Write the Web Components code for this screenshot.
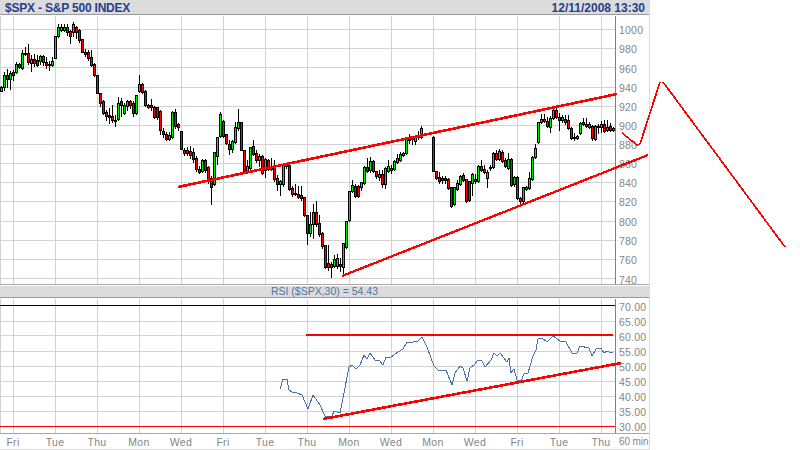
<!DOCTYPE html>
<html><head><meta charset="utf-8"><title>$SPX</title>
<style>html,body{margin:0;padding:0;background:#fff;overflow:hidden}body{font-family:"Liberation Sans",Arial,sans-serif}</style>
</head><body>
<stock-chart>
  <title-bar><span slot="left">$SPX - S&amp;P 500 INDEX</span><span slot="right">12/11/2008 13:30</span></title-bar>
  <price-panel></price-panel>
  <indicator-bar>RSI ($SPX,30) = 54.43</indicator-bar>
  <rsi-panel></rsi-panel>
  <time-axis></time-axis>
  <trend-overlay></trend-overlay>
</stock-chart>
<script>
const VX=[13,55,97,139,181,223,265,307,349,391,433,475,517,559,601];
function gridMarkup(ys,y0,h){
  let d='M0.5 '+y0+'V'+(y0+h);
  VX.forEach(x=>d+='M'+(x+.5)+' '+y0+'V'+(y0+h));
  ys.forEach(y=>d+='M0 '+(y+.5)+'H615');
  return `<path d="${d}" stroke="#d2d2d2" fill="none"/>`;
}
function axisGrid(labels,centers,top){
  const n=centers.length,b=[];
  for(let i=0;i<n-1;i++)b.push((centers[i]+centers[i+1])/2);
  const start=2*centers[0]-b[0],end=2*centers[n-1]-b[n-2];
  const edges=[start,...b,end],rows=[];
  for(let i=0;i<n;i++)rows.push((edges[i+1]-edges[i])+'px');
  return {pad:start-top,rows:rows.join(' '),html:labels.map(l=>`<div>${l}</div>`).join('')};
}
const AXIS_CSS=`.axis{width:33px;box-sizing:border-box;display:grid;align-content:start;padding-left:3px;font-size:10.5px;color:#858585;align-items:center;justify-items:start;letter-spacing:.02em}
.axis div{line-height:12px;white-space:nowrap}
.line{width:1px;background:#808080;flex:none}
svg{display:block;flex:none;shape-rendering:crispEdges}`;

class StockChart extends HTMLElement{
  constructor(){super();this.attachShadow({mode:'open'}).innerHTML=`<style>
  :host{display:flex;flex-direction:column;position:relative;width:650px;height:450px;box-sizing:border-box;border-right:1px solid #dcdcdc;font-family:"Liberation Sans",Arial,sans-serif}
  </style><slot></slot>`;}
}
class TitleBar extends HTMLElement{
  constructor(){super();this.attachShadow({mode:'open'}).innerHTML=`<style>
  :host{display:flex;justify-content:space-between;align-items:center;box-sizing:border-box;height:15px;margin-bottom:1px;padding:1px 4px 0 5px;background:#dcdcdc;border-bottom:1px solid #9a9a9a;color:#24408e;font-weight:bold;font-size:12px;line-height:14px;white-space:nowrap}
  ::slotted([slot=left]){letter-spacing:-.2px}
  </style><slot name="left"></slot><slot name="right"></slot>`;}
}
class IndicatorBar extends HTMLElement{
  constructor(){super();this.attachShadow({mode:'open'}).innerHTML=`<style>
  :host{display:block;box-sizing:border-box;height:12px;margin-bottom:1px;background:#dcdcdc;border-bottom:1px solid #9a9a9a;color:#4f74a8;font-size:10.5px;line-height:11px;text-align:center;white-space:nowrap}
  </style><slot></slot>`;}
}
const CANDLES="g 87 91 86 91;g 75 87 72 90;r 75 79 69 87;g 73 79 71 89;r 72 75 70 80;g 64 72 62 73;r 64 67 63 68;g 53 68 50 69;r 53 54 47 55;r 53 62 44 64;g 59 63 55 71;r 59 63 54 66;r 60 65 55 66;g 56 61 55 64;r 56 62 55 65;r 62 65 57 68;r 64 65 61 70;g 61 65 57 66;g 36 58 36 58;g 27 36 24 37;g 27 30 24 31;g 27 30 24 31;r 27 32 24 35;r 31 36 30 43;g 24 32 22 36;r 27 32 26 38;r 30 40 29 42;r 39 52 39 52;r 52 54 49 56;r 52 58 50 60;r 57 65 50 66;r 64 75 63 76;r 75 93 75 93;r 93 103 93 106;r 101 113 100 114;r 112 116 110 120;r 115 117 108 123;r 116 120 105 122;r 120 121 115 126;g 103 119 97 120;r 101 105 98 116;g 105 113 103 114;g 101 106 100 110;r 101 105 100 108;r 103 113 101 116;g 95 113 95 114;g 84 91 75 92;r 84 92 83 93;r 91 105 90 106;r 105 107 104 108;r 105 107 99 110;r 107 117 106 118;r 107 117 107 119;r 111 130 110 134;r 131 134 128 137;r 134 139 132 140;g 135 139 132 140;g 112 137 111 138;r 112 126 109 128;r 124 127 123 130;r 131 149 131 149;r 150 153 148 155;r 150 153 147 155;r 151 155 146 158;r 152 159 148 162;r 158 169 156 171;r 169 172 166 173;g 160 171 159 172;r 160 170 159 172;r 167 181 166 183;r 178 187 176 204;g 152 184 152 185;g 137 156 137 164;g 114 136 112 137;r 121 136 120 137;r 134 143 134 144;r 144 149 140 154;g 141 149 140 152;g 127 142 122 143;g 122 128 109 130;r 122 150 122 150;r 150 171 150 172;g 166 171 160 172;g 147 168 147 170;r 146 154 140 155;r 153 160 150 162;g 156 160 154 166;r 156 173 155 174;g 159 170 158 177;r 160 169 159 170;r 166 169 158 170;r 167 179 160 181;r 178 184 175 190;g 181 184 180 195;g 164 184 163 186;r 164 166 163 168;r 165 189 165 190;r 188 194 186 196;r 193 194 184 195;r 194 197 186 198;r 195 198 186 200;r 197 215 197 216;r 215 233 215 244;g 224 233 212 236;g 212 224 204 238;r 212 224 201 226;r 223 234 215 236;r 233 246 232 248;r 245 267 245 268;r 263 267 245 270;r 264 267 262 277;g 259 266 255 267;g 258 266 254 268;r 264 266 258 271;g 243 267 243 276;g 221 247 221 248;g 191 220 191 221;g 185 191 180 192;r 186 196 184 197;r 186 196 185 197;g 182 187 182 190;g 167 183 166 184;r 167 171 158 172;g 161 170 157 172;r 161 171 160 172;r 171 176 171 178;g 174 177 170 180;r 174 184 170 187;g 168 184 167 188;g 166 171 160 172;r 168 170 165 173;g 161 169 160 170;g 158 162 154 163;g 154 160 152 161;g 153 155 152 156;g 139 153 139 154;r 137 140 134 143;r 137 139 136 144;g 137 141 136 144;r 136 137 131 139;g 128 137 126 138;_;_;_;r 137 171 136 171;r 171 178 171 179;r 177 181 172 183;r 178 180 176 183;r 178 180 176 183;r 179 188 178 189;r 187 206 187 207;g 187 204 187 205;g 183 189 180 190;g 176 184 175 185;r 175 180 173 181;r 179 201 179 202;r 181 200 181 201;g 174 183 173 195;r 179 181 174 183;g 166 181 165 182;r 166 170 160 171;r 169 172 165 173;g 172 178 170 187;g 167 168 165 170;g 153 167 152 168;r 153 159 150 160;g 151 159 149 160;r 152 161 150 162;r 160 166 158 167;g 159 168 153 169;r 159 185 158 186;g 177 184 176 186;r 177 198 176 199;r 198 201 197 204;g 187 201 187 202;g 187 189 186 190;g 178 188 172 189;g 157 179 156 180;g 148 157 144 158;g 122 142 122 143;g 119 122 114 123;r 119 121 114 122;r 121 126 117 127;g 118 127 116 132;g 110 118 107 119;r 110 117 106 118;r 117 120 113 130;g 117 120 115 122;r 119 122 115 124;r 120 128 115 129;r 128 138 127 139;r 137 138 133 140;g 136 138 135 139;g 123 133 122 134;r 122 124 118 125;r 124 126 118 127;g 124 127 122 128;r 126 138 125 140;g 126 139 125 140;r 126 127 124 133;g 124 127 121 132;r 124 131 120 132;g 127 130 120 131;r 126 130 123 131;g 128 130 127 131";
class PricePanel extends HTMLElement{
  constructor(){super();
    const ys=[29,48,67,87,106,125,144,163,182,201,221,240,259,278];
    let k='',g='',r='',x=1;
    CANDLES.split(';').forEach(s=>{
      if(s!=='_'){
        const [c,t,b,wt,wb]=s.split(' ').map((v,i)=>i?+v:v);
        k+=`M${x} ${wt}h1V${wb+1}h-1z M${x-1} ${t}h3V${b+1}h-3z`;
        if(b-t>1){const f=`M${x} ${t+1}h1V${b}h-1z`;if(c==='g')g+=f;else r+=f;}
      }
      x+=3;
    });
    const labels=[1000,980,960,940,920,900,880,860,840,820,800,780,760,740];
    const centers=[30,49.5,68.5,88,107,126.5,145.5,164,183,202,222,241,260,279.5];
    const a=axisGrid(labels,centers,16);
    this.attachShadow({mode:'open'}).innerHTML=`<style>
    :host{display:flex;height:269px;border-bottom:1px solid #a8a8a8;box-sizing:border-box;margin-bottom:1px}
    ${AXIS_CSS}</style>
    <svg width="615" height="268" viewBox="0 16 615 268">${gridMarkup(ys,16,268)}
      <path d="${k}" fill="#000"/><path d="${g}" fill="#00ea00"/><path d="${r}" fill="#f00"/></svg>
    <div class="line"></div>
    <div class="axis" style="padding-top:${a.pad}px;grid-template-rows:${a.rows}">${a.html}</div>`;
  }
}
const RSI="280,389 283,379 287,379 289,390 292,392 297,393 302,395 308,409 313,395 320,405 325,416 332,416 334,411 340,413 344,393 349,367 352,365 356,369 360,365 364,355 367,359 370,353 376,361 379,360 383,365 386,357 391,357 398,352 403,349 407,342 413,342 418,341 422,337 427,347 434,366 438,370 446,370 452,385 455,373 460,366 463,368 467,381 470,368 474,365 478,360 482,361 485,367 491,360 494,353 497,356 500,353 507,362 509,358 511,373 514,369 517,380 521,381 524,374 528,373 533,356 536,350 538,339 542,338 547,342 553,336 560,341 566,342 572,353 577,353 580,346 589,348 592,356 596,349 601,348 604,353 607,351 611,353 613,352";
class RsiPanel extends HTMLElement{
  constructor(){super();
    const ys=[321,335,351,366,381,396,411];
    const labels=['70.00','65.00','60.00','55.00','50.00','45.00','40.00','35.00','30.00'];
    const centers=[306.5,321.5,336.5,351.5,367,382,397,412,427];
    const a=axisGrid(labels,centers,299);
    this.attachShadow({mode:'open'}).innerHTML=`<style>
    :host{display:flex;height:135px;border-bottom:1px solid #a8a8a8;box-sizing:border-box}
    ${AXIS_CSS}</style>
    <svg width="615" height="134" viewBox="0 299 615 134">${gridMarkup(ys,299,134)}
      <path d="M0 305.5H615" stroke="#000" fill="none"/>
      <path d="M0 426.5H615" stroke="#f00" fill="none"/>
      <polyline points="${RSI}" fill="none" stroke="#4a72aa" stroke-width="1"/></svg>
    <div class="line"></div>
    <div class="axis" style="padding-top:${a.pad}px;grid-template-rows:${a.rows}">${a.html}</div>`;
  }
}
class TimeAxis extends HTMLElement{
  constructor(){super();
    const days=['Fri','Tue','Thu','Mon','Wed','Fri','Tue','Thu','Mon','Wed','Mon','Wed','Fri','Tue','Thu'];
    this.attachShadow({mode:'open'}).innerHTML=`<style>
    :host{display:flex;height:16px;box-sizing:border-box;border-bottom:1px solid #dcdcdc;color:#858585;font-size:10.5px;line-height:16px;white-space:nowrap;letter-spacing:.03em}
    .days{display:grid;grid-template-columns:repeat(15,42px);width:630px;flex:none;margin-left:-8px;margin-right:-3px;text-align:center}
    .unit{font-size:10px;letter-spacing:-.1px}
    </style><div class="days">${days.map(d=>`<div>${d}</div>`).join('')}</div><div class="unit">60 min</div>`;
  }
}
class TrendOverlay extends HTMLElement{
  constructor(){super();
    const thick=[[178,187,617,94],[306,335,613,335],[323,419,621,363]];
    const mid=[[342,276,648,155]];
    const thin=[[622,133,637,145],[637,145,640,144],[640,144,660,82],[663,82,785,247]];
    const L=(a,w)=>a.map(p=>`<line x1="${p[0]}" y1="${p[1]}" x2="${p[2]}" y2="${p[3]}" stroke-width="${w}"/>`).join('');
    this.attachShadow({mode:'open'}).innerHTML=`<style>
    :host{position:absolute;left:0;top:0;width:800px;height:450px;pointer-events:none}
    svg{display:block;shape-rendering:crispEdges;overflow:visible}
    </style><svg width="800" height="450" stroke="#f00" fill="none">${L(thick,2.6)}${L(mid,2.3)}${L(thin,1.7)}</svg>`;
  }
}
customElements.define('stock-chart',StockChart);
customElements.define('title-bar',TitleBar);
customElements.define('indicator-bar',IndicatorBar);
customElements.define('price-panel',PricePanel);
customElements.define('rsi-panel',RsiPanel);
customElements.define('time-axis',TimeAxis);
customElements.define('trend-overlay',TrendOverlay);
</script>
</body></html>
